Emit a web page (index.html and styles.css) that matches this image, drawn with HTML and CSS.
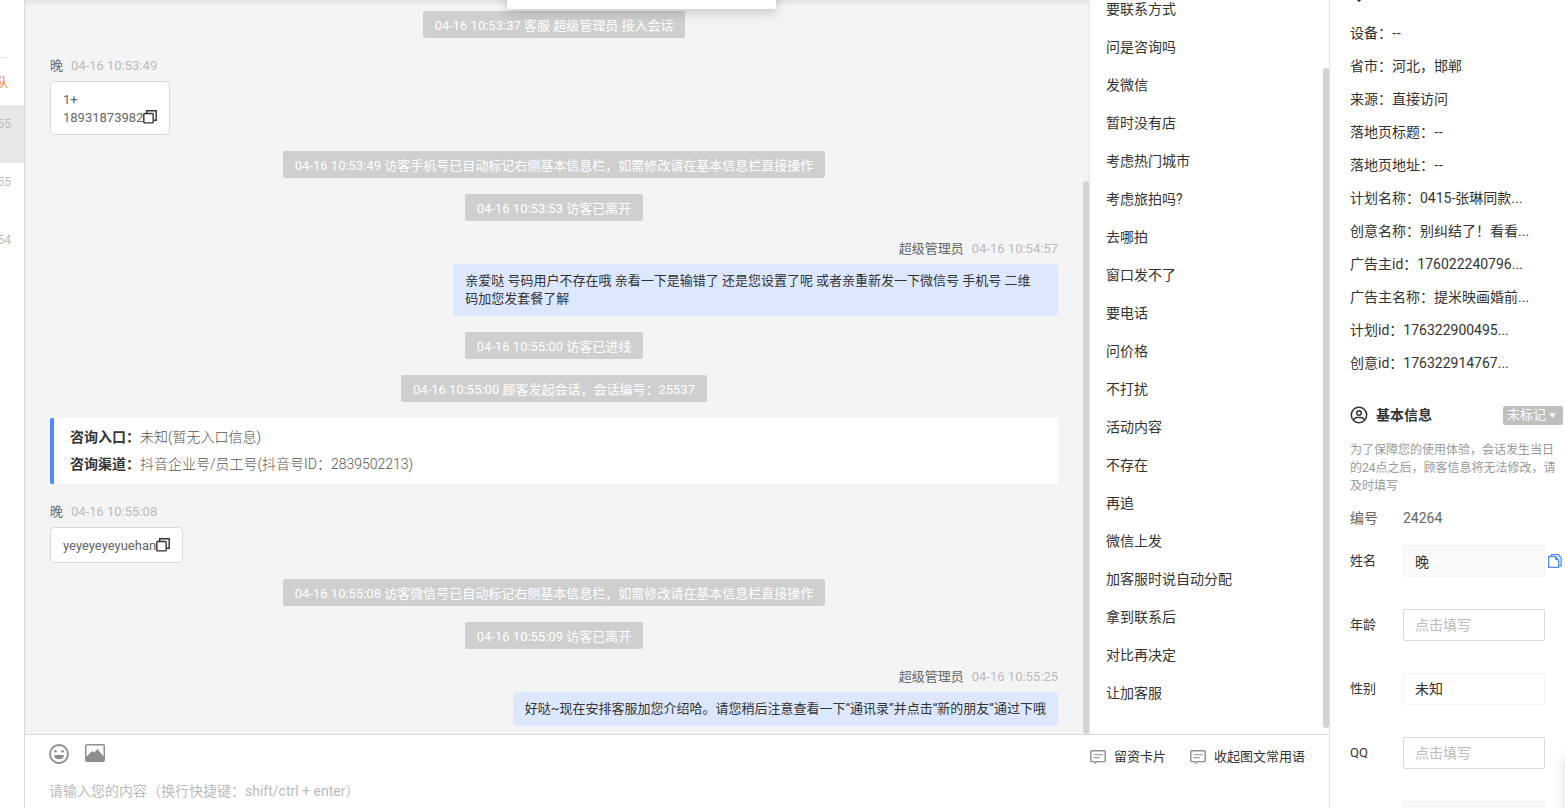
FILE: index.html
```html
<!DOCTYPE html>
<html lang="zh-CN">
<head>
<meta charset="utf-8">
<title>客服会话</title>
<link rel="stylesheet" href="styles.css">
</head>
<body>
<svg class="sprite" aria-hidden="true">
  <symbol id="copy" viewBox="0 0 14 14"><path d="M3.7 3V.8h9.5v9.4H11" fill="none" stroke="currentColor" stroke-width="1.4"/><rect x=".8" y="3.5" width="9.4" height="9.4" rx=".8" fill="none" stroke="currentColor" stroke-width="1.4"/></symbol>
  <symbol id="card" viewBox="0 0 16 14"><path d="M1.6.8h12.8q.8 0 .8.8v9.2q0 .8-.8.8H6.8L5.6 13l-1.2-1.4H1.6q-.8 0-.8-.8V1.600q0-.8.8-.8z" fill="none" stroke="currentColor" stroke-width="1.4"/><path d="M4 4.700h9M3 7.700h7" stroke="currentColor" stroke-width="1.100"/></symbol>
</svg>
<div class="app">
  <aside class="sessions">
    <div class="queue">队</div>
    <ul class="session-list">
      <li class="session active"><time>55</time></li>
      <li class="session"><time>55</time></li>
      <li class="session"><time>54</time></li>
    </ul>
  </aside>

  <main class="workspace">
    <div class="popup"></div>
    <div class="upper">
      <section class="chat">
        <p class="notice">04-16 10:53:37 客服 超级管理员 接入会话</p>
        <article class="msg">
          <header class="meta"><b>晚</b><time>04-16 10:53:49</time></header>
          <div class="bubble">1+<br>18931873982<button class="copy" aria-label="复制"><svg><use href="#copy"/></svg></button></div>
        </article>
        <p class="notice">04-16 10:53:49 访客手机号已自动标记右侧基本信息栏，如需修改请在基本信息栏直接操作</p>
        <p class="notice">04-16 10:53:53 访客已离开</p>
        <article class="msg mine">
          <header class="meta"><b>超级管理员</b><time>04-16 10:54:57</time></header>
          <div class="bubble">亲爱哒 号码用户不存在哦 亲看一下是输错了 还是您设置了呢 或者亲重新发一下微信号 手机号 二维<br>码加您发套餐了解</div>
        </article>
        <p class="notice">04-16 10:55:00 访客已进线</p>
        <p class="notice">04-16 10:55:00 顾客发起会话，会话编号：25537</p>
        <dl class="source">
          <div><dt>咨询入口：</dt><dd>未知(暂无入口信息)</dd></div>
          <div><dt>咨询渠道：</dt><dd>抖音企业号/员工号(抖音号ID：2839502213)</dd></div>
        </dl>
        <article class="msg">
          <header class="meta"><b>晚</b><time>04-16 10:55:08</time></header>
          <div class="bubble">yeyeyeyeyuehan<button class="copy" aria-label="复制"><svg><use href="#copy"/></svg></button></div>
        </article>
        <p class="notice">04-16 10:55:08 访客微信号已自动标记右侧基本信息栏，如需修改请在基本信息栏直接操作</p>
        <p class="notice">04-16 10:55:09 访客已离开</p>
        <article class="msg mine">
          <header class="meta"><b>超级管理员</b><time>04-16 10:55:25</time></header>
          <div class="bubble">好哒~现在安排客服加您介绍哈。请您稍后注意查看一下“通讯录”并点击“新的朋友”通过下哦</div>
        </article>
        <i class="thumb chat-thumb"></i>
      </section>
      <section class="replies">
        <ul>
          <li><button>要联系方式</button></li>
          <li><button>问是咨询吗</button></li>
          <li><button>发微信</button></li>
          <li><button>暂时没有店</button></li>
          <li><button>考虑热门城市</button></li>
          <li><button>考虑旅拍吗?</button></li>
          <li><button>去哪拍</button></li>
          <li><button>窗口发不了</button></li>
          <li><button>要电话</button></li>
          <li><button>问价格</button></li>
          <li><button>不打扰</button></li>
          <li><button>活动内容</button></li>
          <li><button>不存在</button></li>
          <li><button>再追</button></li>
          <li><button>微信上发</button></li>
          <li><button>加客服时说自动分配</button></li>
          <li><button>拿到联系后</button></li>
          <li><button>对比再决定</button></li>
          <li><button>让加客服</button></li>
        </ul>
        <i class="thumb replies-thumb"></i>
      </section>
    </div>
    <section class="composer">
      <div class="toolbar">
        <button class="tool" aria-label="表情"><svg viewBox="0 0 20 20"><circle cx="10" cy="10" r="9" fill="none" stroke="currentColor" stroke-width="1.800"/><circle cx="6.500" cy="7.300" r="1.300" fill="currentColor"/><circle cx="13.500" cy="7.300" r="1.300" fill="currentColor"/><path d="M5 11h10q-.5 4.300-5 4.300T5 11z" fill="currentColor"/></svg></button>
        <button class="tool" aria-label="图片"><svg viewBox="0 0 20 20"><path fill-rule="evenodd" d="M2 0h16q2 0 2 2v14q0 2-2 2H2q-2 0-2-2V2q0-2 2-2zm0 1.500q-.5 0-.5.5v10.500L6 8l1.500-.8L9 8.500 12.500 5l6 7.500V2q0-.5-.5-.5z" fill="currentColor"/></svg></button>
        <div class="shortcuts">
          <button><svg><use href="#card"/></svg>留资卡片</button>
          <button><svg><use href="#card"/></svg>收起图文常用语</button>
        </div>
      </div>
      <textarea rows="1" aria-label="消息内容" placeholder="请输入您的内容（换行快捷键：shift/ctrl + enter）"></textarea>
    </section>
  </main>

  <aside class="info">
    <h2 class="title visit"><svg viewBox="0 0 18 18"><path d="M9 17 3 10.500a7 7 0 1 1 12 0z" fill="none" stroke="currentColor" stroke-width="1.700"/></svg>访客信息</h2>
    <ul class="facts">
      <li>设备：<span class="empty">--</span></li>
      <li>省市：河北，邯郸</li>
      <li>来源：直接访问</li>
      <li>落地页标题：<span class="empty">--</span></li>
      <li>落地页地址：<span class="empty">--</span></li>
      <li>计划名称：0415-张琳同款...</li>
      <li>创意名称：别纠结了！看看...</li>
      <li>广告主id：176022240796...</li>
      <li>广告主名称：提米映画婚前...</li>
      <li>计划id：176322900495...</li>
      <li>创意id：176322914767...</li>
    </ul>
    <h2 class="title"><svg viewBox="0 0 18 18"><g fill="none" stroke="currentColor" stroke-width="1.500"><circle cx="9" cy="9" r="7.700"/><circle cx="9" cy="7" r="2.300"/><path d="M3.500 14q1-2.500 3.500-2.500h4q2.500 0 3.500 2.500"/></g></svg>基本信息<button class="mark">未标记<svg viewBox="0 0 8 5"><path d="M0 0h8L4 5z" fill="currentColor"/></svg></button></h2>
    <p class="hint">为了保障您的使用体验，会话发生当日的24点之后，顾客信息将无法修改，请及时填写</p>
    <p class="number"><span>编号</span><span>24264</span></p>
    <form class="fields">
      <div class="field"><label for="name">姓名</label><input id="name" class="locked" value="晚" readonly><button type="button" class="copy-name" aria-label="复制姓名"><svg viewBox="0 0 14 14"><path d="M3.500 2V.7h6.700l3 3v8.200h-2" fill="none" stroke="currentColor" stroke-width="1.300"/><path d="M.7 2.500h6.500l3.500 3.500v7.300H.7z" fill="none" stroke="currentColor" stroke-width="1.300"/><path d="M7 2.500V6h3.700z" fill="currentColor"/></svg></button></div>
      <div class="field"><label for="age">年龄</label><input id="age" placeholder="点击填写"></div>
      <div class="field"><label for="sex">性别</label><select id="sex"><option>未知</option></select></div>
      <div class="field"><label for="qq">QQ</label><input id="qq" placeholder="点击填写"></div>
      <div class="field"><span></span><input class="locked" aria-label="其他" readonly></div>
    </form>
    <div class="float"></div>
  </aside>
</div>
</body>
</html>
```
FILE: styles.css
```css
* { box-sizing: border-box; }
body, p, ul, dl, dd, h2 { margin: 0; padding: 0; }
ul { list-style: none; }
body {
  background: #fff;
  color: #333;
  font: 14px/18px Roboto, "Noto Sans CJK SC", sans-serif;
}
button, input, select, textarea { font: inherit; color: inherit; }
button { padding: 0; border: 0; background: none; cursor: pointer; }
.sprite { position: absolute; width: 0; height: 0; }
.app { display: flex; height: 100vh; overflow: hidden; }

.sessions {
  flex: none;
  width: 25px;
  overflow: hidden;
  border-right: 1px solid #d9d9d9;
  font-size: 12px;
}
.queue {
  display: flex;
  justify-content: flex-end;
  align-items: center;
  width: 8px;
  height: 48px;
  margin: 57px 0 0;
  padding-top: 2px;
  border-top: 1px solid #e6e6e6;
  color: #ff7a33;
}
.session {
  display: flex;
  justify-content: flex-end;
  width: 24px;
  height: 58px;
  padding: 10px 13px 0 0;
  color: #bbb;
}
.active { background: #e8e8e8; }

.workspace {
  position: relative;
  display: flex;
  flex: 1;
  flex-direction: column;
  min-width: 0;
}
.popup {
  position: absolute;
  z-index: 2;
  top: -20px;
  left: 37%;
  width: 269px;
  height: 29px;
  border-radius: 2px;
  background: #fff;
  box-shadow: 0 4px 12px rgba(0, 0, 0, .18);
}
.upper { display: flex; flex: 1; min-height: 0; overflow: hidden; }
.chat {
  position: relative;
  display: flex;
  flex: 1;
  flex-direction: column;
  gap: 16px;
  min-width: 0;
  padding: 11px 31px 8px 25px;
  overflow: hidden;
  background: #f3f4f6;
  box-shadow: inset 0 5px 5px -3px rgba(0, 0, 0, .1);
  font-size: 13px;
}
.notice {
  align-self: center;
  padding: 6px 12px 3px;
  border-radius: 2px;
  background: #cfcfcf;
  color: #fff;
}
.msg { display: flex; flex-direction: column; align-items: flex-start; gap: 3px; }
.meta { display: flex; gap: 8px; line-height: 24px; color: #bbb; }
.meta b { font-weight: 400; color: #666; }
.bubble {
  padding: 9px 12px 7px;
  border: 1px solid #d9d9d9;
  border-radius: 4px;
  background: #fff;
  color: #666;
}
.mine { align-items: flex-end; }
.mine .bubble {
  max-width: 60%;
  padding: 8px 12px;
  border: 0;
  background: #dce8ff;
  color: #333;
}
.mine .bubble:has(br) { min-width: 60%; }
.copy { width: 14px; height: 14px; vertical-align: -2px; color: #333; }
.copy svg { display: block; width: 14px; height: 14px; }
.source {
  display: flex;
  flex-direction: column;
  gap: 9px;
  padding: 10px 16px 11px;
  border-left: 4px solid #4e8cff;
  border-radius: 2px;
  background: #fff;
  font-size: 14px;
}
.source div { display: flex; }
.source dt { font-weight: 700; }
.source dd { color: #555; font-weight: 300; }
.thumb { position: absolute; width: 6px; border-radius: 3px; background: #d3d3d3; }
.chat-thumb { right: 0; top: 181px; bottom: 0; }

.replies {
  position: relative;
  flex: none;
  width: 240px;
  overflow: hidden;
  border-left: 1px solid #e6e6e6;
}
.replies ul { margin-top: -10px; }
.replies li button {
  width: 100%;
  height: 38px;
  padding: 0 16px;
  text-align: left;
}
.replies-thumb { right: 0; top: 68px; bottom: 6px; }

.composer {
  flex: none;
  height: 74px;
  padding: 9px 24px 0;
  border-top: 1px solid #d9d9d9;
}
.toolbar { display: flex; gap: 16px; height: 26px; }
.tool { width: 20px; height: 20px; color: #8e8e8e; }
.tool svg { display: block; width: 20px; height: 20px; }
.shortcuts { display: flex; gap: 24px; margin-left: auto; font-size: 13px; }
.shortcuts button { display: flex; align-items: center; gap: 8px; }
.shortcuts svg { width: 16px; height: 14px; color: #8e8e8e; }
.composer textarea {
  display: block;
  width: 100%;
  height: 24px;
  margin-top: 12px;
  padding: 0;
  border: 0;
  resize: none;
  outline: 0;
}
::placeholder { color: #bbb; opacity: 1; }

.info {
  position: relative;
  flex: none;
  width: 236px;
  padding: 0 2px 0 20px;
  overflow: hidden;
  border-left: 1px solid #e0e0e0;
}
.title {
  display: flex;
  align-items: center;
  gap: 8px;
  height: 22px;
  font-size: 14px;
  font-weight: 700;
}
.title > svg { width: 18px; height: 18px; }
.visit { margin: -18px 0 13px; }
.facts li { line-height: 33px; white-space: nowrap; }
.facts { margin-bottom: 24px; }
.facts .empty { font-family: "Open Sans", sans-serif; line-height: 18px; }
.mark {
  display: flex;
  align-items: center;
  gap: 3px;
  height: 19px;
  margin-left: auto;
  padding: 0 7px 0 4px;
  border-radius: 2px;
  background: #bfbfbf;
  color: #fff;
  font-size: 13px;
  font-weight: 400;
}
.mark svg { width: 7px; height: 5px; }
.hint {
  margin: 15px 3px 14px 0;
  color: #999;
  font-size: 12px;
}
.number, .field { display: grid; grid-template-columns: 53px 142px auto; align-items: center; }
.number { margin-bottom: 18px; color: #666; }
.fields { display: grid; gap: 32px; font-size: 13px; }
.field { justify-content: start; }
.field input, .field select {
  width: 100%;
  height: 32px;
  padding: 0 11px;
  border: 1px solid #d9d9d9;
  border-radius: 2px;
  background: #fff;
  font-size: 14px;
  appearance: none;
}
.field .locked { border-color: #f3f3f3; background: #fafafa; }
.field select { border-color: #f3f3f3; }
.copy-name { width: 14px; height: 14px; margin-left: 3px; color: #4e8cff; }
.copy-name svg { display: block; width: 14px; height: 14px; }
.float {
  position: absolute;
  right: -20px;
  bottom: -20px;
  width: 20px;
  height: 70px;
  box-shadow: 0 0 12px rgba(0, 0, 0, .15);
}
```
